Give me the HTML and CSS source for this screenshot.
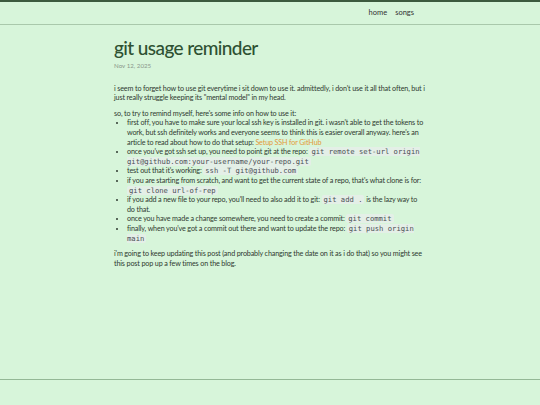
FILE: index.html
```html
<!DOCTYPE html>
<html>
<head>
<meta charset="utf-8">
<link rel="stylesheet" href="styles.css">
</head>
<body>
<header class="site-header">
  <nav class="nav">
    <a href="#">home</a>
    <a href="#">songs</a>
  </nav>
</header>
<main class="main">
  <h1 class="title">git usage reminder</h1>
  <div class="date">Nov 12, 2025</div>
  <p>i seem to forget how to use git everytime i sit down to use it. admittedly, i don't use it all that often, but i just really struggle keeping its "mental model" in my head.</p>
  <p class="tight">so, to try to remind myself, here's some info on how to use it:</p>
  <ul class="list">
    <li>first off, you have to make sure your local ssh key is installed in git. i wasn't able to get the tokens to work, but ssh definitely works and everyone seems to think this is easier overall anyway. here's an article to read about how to do that setup: <a class="link" href="#">Setup SSH for GitHub</a></li>
    <li>once you've got ssh set up, you need to point git at the repo: <code>git remote set-url origin git@github.com:your-username/your-repo.git</code></li>
    <li>test out that it's working: <code>ssh -T git@github.com</code></li>
    <li>if you are starting from scratch, and want to get the current state of a repo, that's what clone is for: <code>git clone url-of-rep</code></li>
    <li>if you add a new file to your repo, you'll need to also add it to git: <code>git add .</code> is the lazy way to do that.</li>
    <li>once you have made a change somewhere, you need to create a commit: <code>git commit</code></li>
    <li>finally, when you've got a commit out there and want to update the repo: <code>git push origin main</code></li>
  </ul>
  <p>i'm going to keep updating this post (and probably changing the date on it as i do that) so you might see this post pop up a few times on the blog.</p>
</main>
<footer class="site-footer"></footer>
</body>
</html>
```
FILE: styles.css
```css
html, body { margin: 0; padding: 0; }
body {
  background: #d7f5da;
  color: #2f3a30;
  font-family: "Lato", "Noto Sans", sans-serif;
  font-size: 7.2px;
  letter-spacing: -0.15px;
  line-height: 9.6px;
  min-height: 100vh;
  display: flex;
  flex-direction: column;
  border-top: 2px solid #3c5a3e;
  box-sizing: border-box;
}
.site-header {
  height: 22px;
  border-bottom: 1px solid #a9c8ab;
  display: flex;
  justify-content: flex-end;
  align-items: center;
  padding: 0 126px 0 0;
}
.nav { display: flex; gap: 8px; letter-spacing: 0; }
.nav a { color: #333; text-decoration: none; font-size: 7.5px; }
.main {
  flex: 1;
  width: 312px;
  margin: 0 auto;
  padding-top: 11px;
}
.title {
  font-family: "Lato", sans-serif;
  font-weight: 500;
  font-size: 19px;
  letter-spacing: -0.6px;
  line-height: 24px;
  color: #2e5132;
  margin: 0;
}
.date {
  color: #8a978b;
  font-size: 6.2px;
  letter-spacing: 0;
  margin-top: 1px;
  margin-bottom: 13px;
}
p { margin: 0 0 6px; }
p.tight { margin-bottom: 0; }
.list { margin: 0 0 6px; padding-left: 13px; }
.link { color: #e39a3a; text-decoration: none; }
code {
  font-family: "DejaVu Sans Mono", monospace;
  font-size: 7.2px;
  line-height: 8px;
  letter-spacing: 0;
  background: #e4efe7;
  color: #4a4f55;
  padding: 0 2px;
  border-radius: 2px;
}
.site-footer {
  height: 25px;
  border-top: 1px solid #94b896;
}
```
